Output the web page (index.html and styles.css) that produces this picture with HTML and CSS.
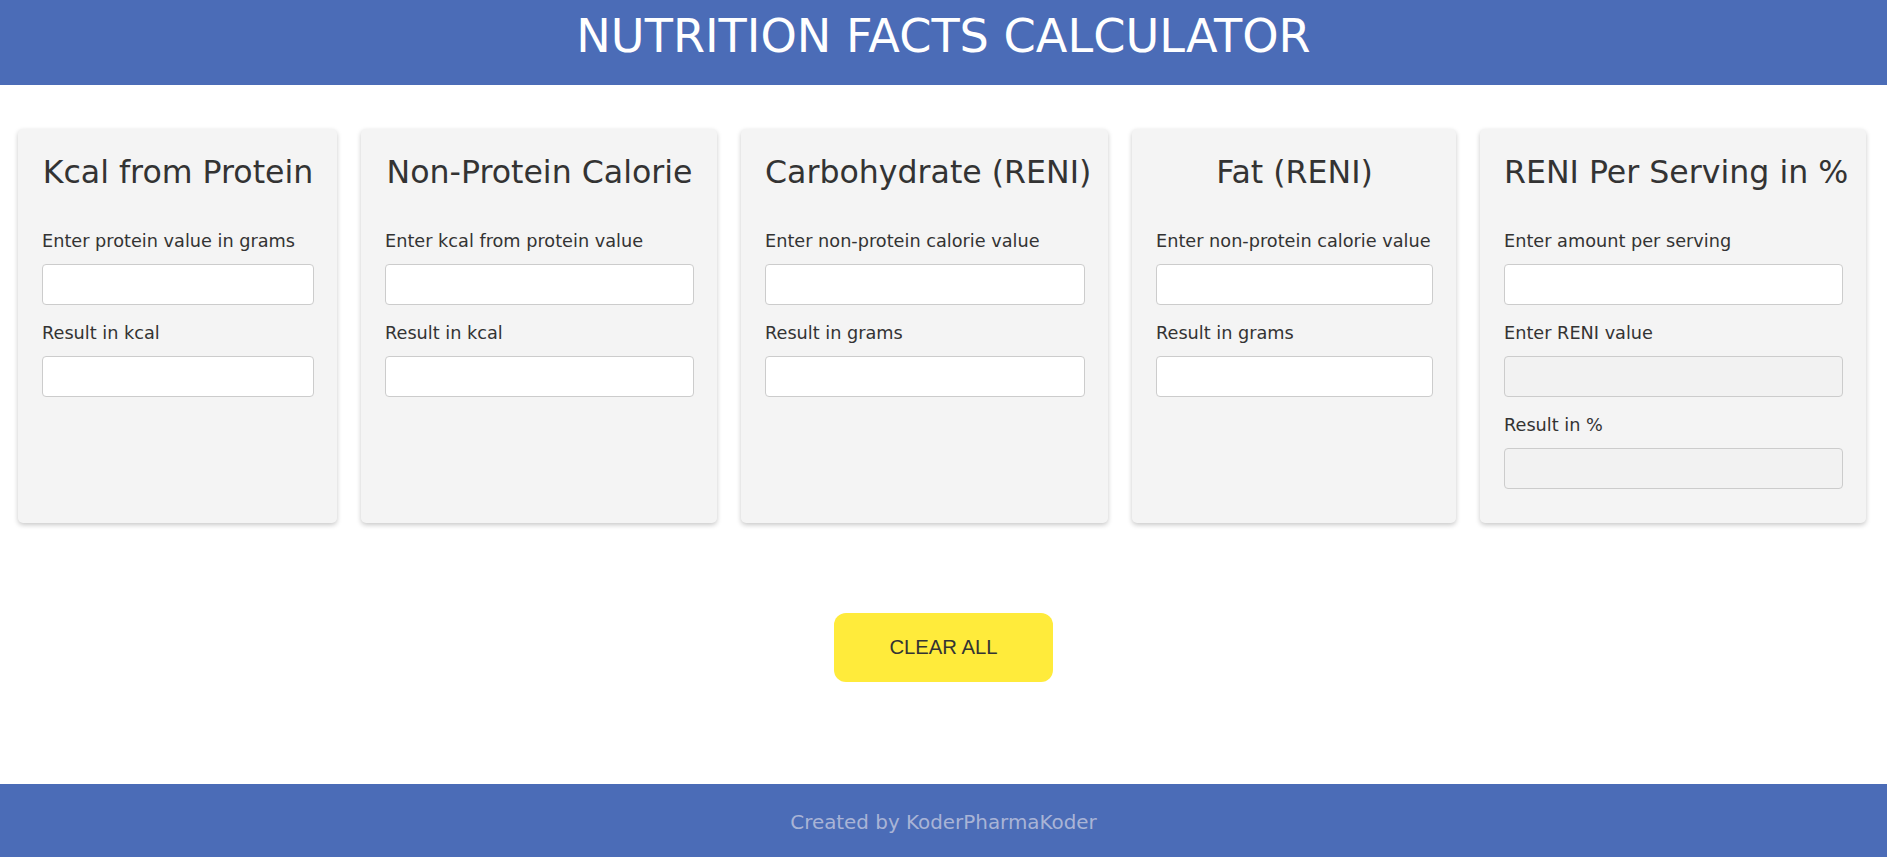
FILE: index.html
```html
<!DOCTYPE html>
<html lang="en">
<head>
<meta charset="utf-8">
<title>Nutrition Facts Calculator</title>
<link rel="stylesheet" href="styles.css">
</head>
<body>
<header class="top-bar">
  <h1 class="title">NUTRITION FACTS CALCULATOR</h1>
</header>
<main class="main">
  <section class="cards">
    <div class="card">
      <h2 class="card-title">Kcal from Protein</h2>
      <label class="field-label">Enter protein value in grams</label>
      <input class="field" type="text">
      <label class="field-label">Result in kcal</label>
      <input class="field" type="text">
    </div>
    <div class="card">
      <h2 class="card-title">Non-Protein Calorie</h2>
      <label class="field-label">Enter kcal from protein value</label>
      <input class="field" type="text">
      <label class="field-label">Result in kcal</label>
      <input class="field" type="text">
    </div>
    <div class="card">
      <h2 class="card-title">Carbohydrate (RENI)</h2>
      <label class="field-label">Enter non-protein calorie value</label>
      <input class="field" type="text">
      <label class="field-label">Result in grams</label>
      <input class="field" type="text">
    </div>
    <div class="card">
      <h2 class="card-title">Fat (RENI)</h2>
      <label class="field-label">Enter non-protein calorie value</label>
      <input class="field" type="text">
      <label class="field-label">Result in grams</label>
      <input class="field" type="text">
    </div>
    <div class="card">
      <h2 class="card-title">RENI Per Serving in %</h2>
      <label class="field-label">Enter amount per serving</label>
      <input class="field" type="text">
      <label class="field-label">Enter RENI value</label>
      <input class="field field-disabled" type="text" disabled>
      <label class="field-label">Result in %</label>
      <input class="field field-disabled" type="text" disabled>
    </div>
  </section>
  <div class="actions">
    <button class="clear-btn" type="button">CLEAR ALL</button>
  </div>
</main>
<footer class="bottom-bar">
  <p class="credit">Created by KoderPharmaKoder</p>
</footer>
</body>
</html>
```

FILE: styles.css
```css
* {
  box-sizing: border-box;
}

html, body {
  margin: 0;
  padding: 0;
}

body {
  font-family: "DejaVu Sans", "Liberation Sans", sans-serif;
  color: #333333;
  background: #ffffff;
  min-height: 100vh;
  display: flex;
  flex-direction: column;
}

.top-bar {
  background: #4b6cb7;
  height: 85px;
  padding-top: 13px;
}

.title {
  margin: 0;
  text-align: center;
  color: #ffffff;
  font-weight: normal;
  font-size: 46.2px;
  line-height: 46px;
}

.main {
  padding-top: 44px;
}

.cards {
  display: grid;
  grid-template-columns: 319px 356px 367px 324px 386px;
  column-gap: 24px;
  justify-content: start;
  padding-left: 18px;
  align-items: stretch;
}

.card {
  background: #f4f4f4;
  border-radius: 5px;
  box-shadow: 0 2px 5px rgba(0, 0, 0, 0.22);
  padding: 24px 23px 17px 24px;
  display: flex;
  flex-direction: column;
}

.card-title {
  margin: 0 0 39px 0;
  font-weight: normal;
  font-size: 31.6px;
  line-height: 38px;
  text-align: center;
  white-space: nowrap;
  color: #333333;
}

.field-label {
  display: block;
  font-size: 17.7px;
  line-height: 22px;
  margin-bottom: 12px;
  white-space: nowrap;
  color: #333333;
}

.field {
  display: block;
  width: 100%;
  height: 41px;
  margin: 0 0 17px 0;
  border: 1px solid #cccccc;
  border-radius: 4px;
  background: #ffffff;
  font-size: 16px;
  padding: 0 10px;
}

.field-disabled {
  background: #f2f2f2;
}

.actions {
  display: flex;
  justify-content: center;
  padding-top: 90px;
}

.clear-btn {
  font-family: "Liberation Sans", Arial, sans-serif;
  font-size: 20.3px;
  line-height: 23px;
  color: #333333;
  background: #ffeb3b;
  border: none;
  border-radius: 12px;
  width: 219px;
  height: 69px;
  padding: 0;
  cursor: pointer;
}

.bottom-bar {
  margin-top: auto;
  background: #4b6cb7;
  height: 73px;
  display: flex;
  align-items: center;
  justify-content: center;
  padding-top: 5px;
}

.credit {
  margin: 0;
  color: #a9b4d6;
  font-size: 19.9px;
  line-height: 24px;
}
```
